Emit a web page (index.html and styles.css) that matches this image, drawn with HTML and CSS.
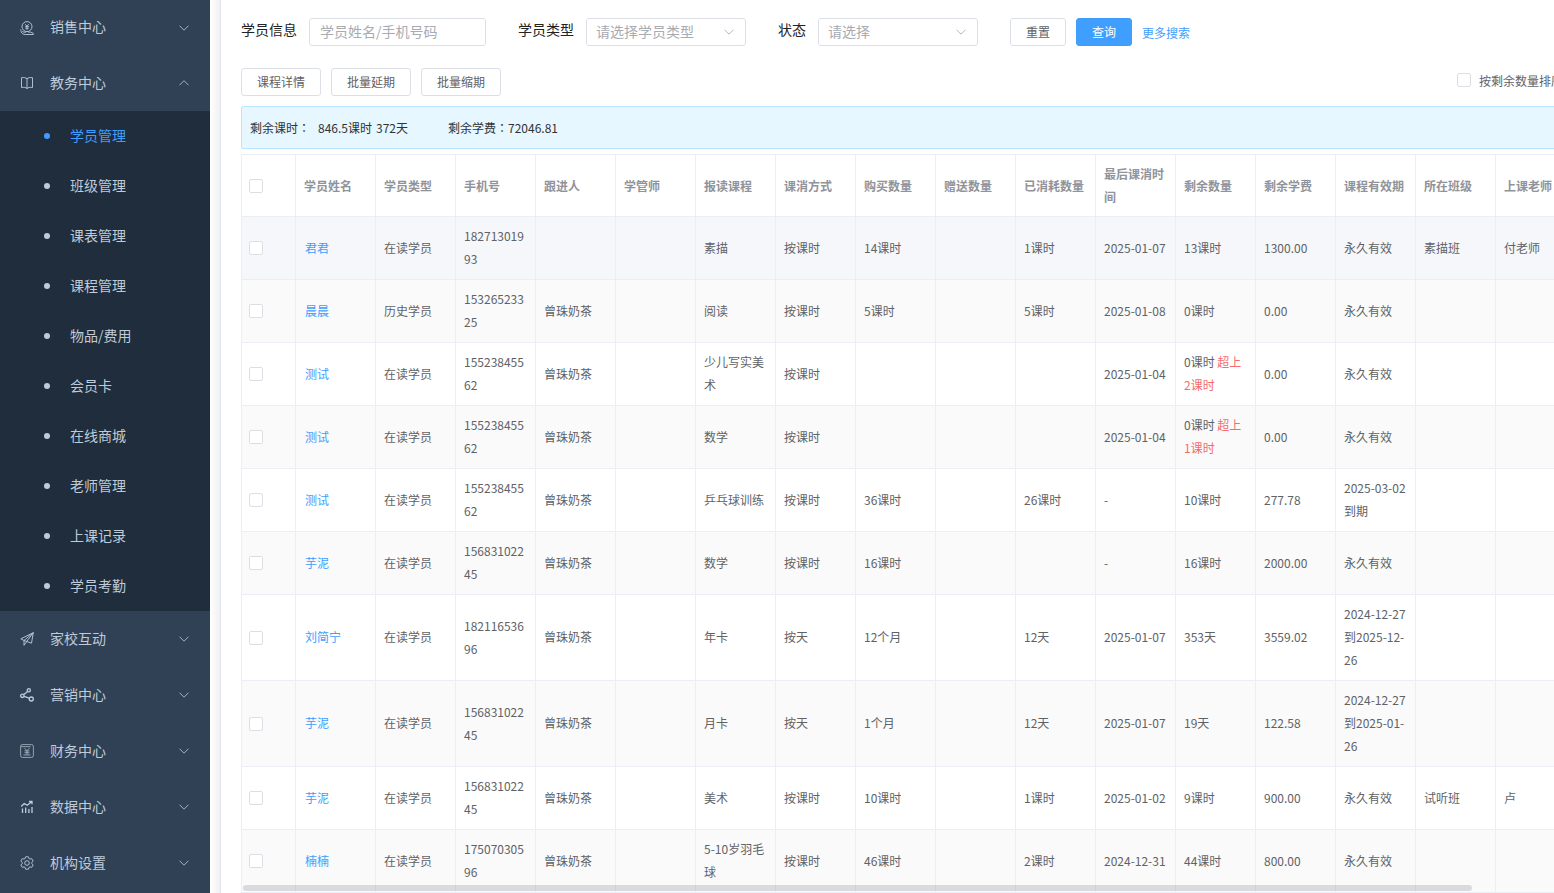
FILE: index.html
```html
<!DOCTYPE html>
<html lang="zh-CN">
<head>
<meta charset="utf-8">
<title>学员管理</title>
<link rel="stylesheet" href="styles.css">
</head>
<body>
<svg class="defs" aria-hidden="true">
  <symbol id="down" viewBox="0 0 12 12"><path d="M1.5 3.7 6 8.2l4.500-4.500"/></symbol>
  <symbol id="up" viewBox="0 0 12 12"><path d="M1.500 8.200 6 3.700l4.500 4.500"/></symbol>
</svg>
<div class="app">
  <nav class="sidebar">
    <a class="item" href="#"><svg class="icon" viewBox="0 0 14 14"><circle cx="7" cy="5.600" r="5"/><path d="M5.200 3.200 7 5.200l1.800-2M7 5.200v3.600M5.200 5.600h3.600M5.200 7.200h3.600M.5 8.500c.5 1.500 1.500 2.200 3 2.500l2.500.300M.8 10.500c1 2 2.500 3 4.500 3h8v-1.200l-2.800-1.200H8"/></svg><span>销售中心</span><svg class="arrow"><use href="#down"/></svg></a>
    <a class="item" href="#"><svg class="icon" viewBox="0 0 14 14"><path d="M7 2.800v9.700M7 2.800C5.800 1.600 4 1.300 1.500 1.700v9.800c2.500-.4 4.300-.1 5.500 1M7 2.800c1.200-1.200 3-1.500 5.500-1.100v9.800c-2.500-.4-4.300-.1-5.500 1"/></svg><span>教务中心</span><svg class="arrow"><use href="#up"/></svg></a>
    <div class="submenu">
      <a class="sub active" href="#"><span>学员管理</span></a>
      <a class="sub" href="#"><span>班级管理</span></a>
      <a class="sub" href="#"><span>课表管理</span></a>
      <a class="sub" href="#"><span>课程管理</span></a>
      <a class="sub" href="#"><span>物品/费用</span></a>
      <a class="sub" href="#"><span>会员卡</span></a>
      <a class="sub" href="#"><span>在线商城</span></a>
      <a class="sub" href="#"><span>老师管理</span></a>
      <a class="sub" href="#"><span>上课记录</span></a>
      <a class="sub" href="#"><span>学员考勤</span></a>
    </div>
    <a class="item" href="#"><svg class="icon" viewBox="0 0 14 14"><path d="M13.300.7.800 6.800l3.200 1.700 7.500 2.700zM13.300.7 4 8.500v4.800l2.600-3.700M13.300.7 6.600 9.600"/></svg><span>家校互动</span><svg class="arrow"><use href="#down"/></svg></a>
    <a class="item" href="#"><svg class="icon bold" viewBox="0 0 14 14"><circle cx="8.800" cy="2.300" r="1.600"/><circle cx="2.300" cy="7.800" r="1.700"/><circle cx="11.300" cy="11" r="2"/><path d="m7.600 3.500-4 3.200M4 8.400l5.300 1.800"/></svg><span>营销中心</span><svg class="arrow"><use href="#down"/></svg></a>
    <a class="item" href="#"><svg class="icon thin" viewBox="0 0 14 14"><rect x=".6" y=".6" width="12.800" height="12.800" rx="1.800"/><path d="M1 2.700h9.500M4.500 4.200 7 6.700l2.500-2.500M7 6.700v4M4.500 6.900h5M4.500 8.700h5M3.500 10.900h7"/></svg><span>财务中心</span><svg class="arrow"><use href="#down"/></svg></a>
    <a class="item" href="#"><svg class="icon bold" viewBox="0 0 14 14"><path d="m1.200 6.500 3-3 3 1.700 4.500-3.500M9 1.500h3v2.800M2.500 8.500v4.500M5.700 7.500V13M8.900 9v4M12 7v6"/></svg><span>数据中心</span><svg class="arrow"><use href="#down"/></svg></a>
    <a class="item" href="#"><svg class="icon" viewBox="0 0 14 14"><circle cx="7" cy="7" r="2.300"/><path d="M5.600.8h2.800l.5 1.700 1.100.600 1.700-.5 1.500 2.400L11.900 6.300v1.400l1.300 1.300-1.500 2.400-1.700-.5-1.100.600-.5 1.700H5.600l-.5-1.700-1.100-.600-1.700.5L.8 9l1.300-1.300V6.300L.8 5l1.500-2.400 1.700.5 1.100-.600z"/></svg><span>机构设置</span><svg class="arrow"><use href="#down"/></svg></a>
  </nav>
  <div class="edge"></div>
  <main class="panel">
    <form class="filters">
      <div class="field"><label for="info">学员信息</label><input class="box text" id="info" type="text" placeholder="学员姓名/手机号码"></div>
      <div class="field"><label for="type">学员类型</label><span class="pick"><select class="box" id="type"><option>请选择学员类型</option></select><svg class="caret"><use href="#down"/></svg></span></div>
      <div class="field"><label for="state">状态</label><span class="pick"><select class="box" id="state"><option>请选择</option></select><svg class="caret"><use href="#down"/></svg></span></div>
      <div class="actions"><button class="btn" type="button">重置</button><button class="btn primary" type="button">查询</button><a class="more" href="#">更多搜索</a></div>
    </form>
    <div class="toolbar">
      <button class="btn" type="button">课程详情</button>
      <button class="btn" type="button">批量延期</button>
      <button class="btn" type="button">批量缩期</button>
      <label class="sort"><input class="check" type="checkbox">按剩余数量排序</label>
    </div>
    <div class="summary">
      <span>剩余课时<span lang="zh-TW" class="colon">：</span></span><span class="hours">846.5课时</span><span class="days">372天</span><span class="fee">剩余学费<span lang="zh-TW" class="colon">：</span>72046.81</span>
    </div>
    <div class="grid">
      <table>
        <colgroup><col class="pickcol"><col span="16"></colgroup>
        <thead>
          <tr><th><input class="check" type="checkbox" aria-label="全选"></th><th>学员姓名</th><th>学员类型</th><th>手机号</th><th>跟进人</th><th>学管师</th><th>报读课程</th><th>课消方式</th><th>购买数量</th><th>赠送数量</th><th>已消耗数量</th><th>最后课消时间</th><th>剩余数量</th><th>剩余学费</th><th>课程有效期</th><th>所在班级</th><th>上课老师</th></tr>
        </thead>
        <tbody>
          <tr class="hover"><td><input class="check" type="checkbox" aria-label="选择君君"></td><td><a href="#">君君</a></td><td>在读学员</td><td>18271301993</td><td></td><td></td><td>素描</td><td>按课时</td><td>14课时</td><td></td><td>1课时</td><td>2025-01-07</td><td>13课时</td><td>1300.00</td><td>永久有效</td><td>素描班</td><td>付老师</td></tr>
          <tr><td><input class="check" type="checkbox" aria-label="选择晨晨"></td><td><a href="#">晨晨</a></td><td>历史学员</td><td>15326523325</td><td>曾珠奶茶</td><td></td><td>阅读</td><td>按课时</td><td>5课时</td><td></td><td>5课时</td><td>2025-01-08</td><td>0课时</td><td>0.00</td><td>永久有效</td><td></td><td></td></tr>
          <tr><td><input class="check" type="checkbox" aria-label="选择测试"></td><td><a href="#">测试</a></td><td>在读学员</td><td>15523845562</td><td>曾珠奶茶</td><td></td><td>少儿写实美术</td><td>按课时</td><td></td><td></td><td></td><td>2025-01-04</td><td>0课时 <span class="over">超上2课时</span></td><td>0.00</td><td>永久有效</td><td></td><td></td></tr>
          <tr><td><input class="check" type="checkbox" aria-label="选择测试"></td><td><a href="#">测试</a></td><td>在读学员</td><td>15523845562</td><td>曾珠奶茶</td><td></td><td>数学</td><td>按课时</td><td></td><td></td><td></td><td>2025-01-04</td><td>0课时 <span class="over">超上1课时</span></td><td>0.00</td><td>永久有效</td><td></td><td></td></tr>
          <tr><td><input class="check" type="checkbox" aria-label="选择测试"></td><td><a href="#">测试</a></td><td>在读学员</td><td>15523845562</td><td>曾珠奶茶</td><td></td><td>乒乓球训练</td><td>按课时</td><td>36课时</td><td></td><td>26课时</td><td>-</td><td>10课时</td><td>277.78</td><td>2025-03-02到期</td><td></td><td></td></tr>
          <tr><td><input class="check" type="checkbox" aria-label="选择芋泥"></td><td><a href="#">芋泥</a></td><td>在读学员</td><td>15683102245</td><td>曾珠奶茶</td><td></td><td>数学</td><td>按课时</td><td>16课时</td><td></td><td></td><td>-</td><td>16课时</td><td>2000.00</td><td>永久有效</td><td></td><td></td></tr>
          <tr><td><input class="check" type="checkbox" aria-label="选择刘简宁"></td><td><a href="#">刘简宁</a></td><td>在读学员</td><td>18211653696</td><td>曾珠奶茶</td><td></td><td>年卡</td><td>按天</td><td>12个月</td><td></td><td>12天</td><td>2025-01-07</td><td>353天</td><td>3559.02</td><td>2024-12-27到2025-12-26</td><td></td><td></td></tr>
          <tr><td><input class="check" type="checkbox" aria-label="选择芋泥"></td><td><a href="#">芋泥</a></td><td>在读学员</td><td>15683102245</td><td>曾珠奶茶</td><td></td><td>月卡</td><td>按天</td><td>1个月</td><td></td><td>12天</td><td>2025-01-07</td><td>19天</td><td>122.58</td><td>2024-12-27到2025-01-26</td><td></td><td></td></tr>
          <tr><td><input class="check" type="checkbox" aria-label="选择芋泥"></td><td><a href="#">芋泥</a></td><td>在读学员</td><td>15683102245</td><td>曾珠奶茶</td><td></td><td>美术</td><td>按课时</td><td>10课时</td><td></td><td>1课时</td><td>2025-01-02</td><td>9课时</td><td>900.00</td><td>永久有效</td><td>试听班</td><td>卢</td></tr>
          <tr><td><input class="check" type="checkbox" aria-label="选择楠楠"></td><td><a href="#">楠楠</a></td><td>在读学员</td><td>17507030596</td><td>曾珠奶茶</td><td></td><td>5-10岁羽毛球</td><td>按课时</td><td>46课时</td><td></td><td>2课时</td><td>2024-12-31</td><td>44课时</td><td>800.00</td><td>永久有效</td><td></td><td></td></tr>
        </tbody>
      </table>
      <div class="thumb"></div>
    </div>
  </main>
</div>
</body>
</html>
```
FILE: styles.css
```css
* { box-sizing: border-box; }

body {
  margin: 0;
  overflow: hidden;
  background: #fff;
  color: #606266;
  font: 12px/23px "Noto Sans CJK SC", sans-serif;
}

a { color: #409eff; text-decoration: none; }
button, input, select { margin: 0; font-family: inherit; }
.defs { display: none; }

.app { display: flex; height: 100vh; }

.sidebar {
  flex: 0 0 210px;
  overflow: hidden;
  background: #304156;
}

.item {
  display: flex;
  align-items: center;
  height: 56px;
  padding: 0 20px;
  color: #bfcbd9;
  font-size: 14px;
}

.item:first-child { height: 55px; }
.item span, .sub span { padding-bottom: 2px; }

.icon {
  width: 14px;
  height: 14px;
  margin-right: 16px;
  fill: none;
  stroke: #bfcbd9;
  stroke-width: 0.9;
}

.icon.thin { stroke-width: 0.7; }
.icon.bold { stroke-width: 1.3; }

.arrow, .caret {
  width: 12px;
  height: 12px;
  fill: none;
  stroke: #a5b1bf;
  stroke-width: 1;
}

.arrow { margin-left: auto; }

.submenu { background: #1f2d3d; }

.sub {
  display: flex;
  align-items: center;
  height: 50px;
  padding-left: 44px;
  color: #bfcbd9;
  font-size: 14px;
}

.sub::before {
  content: "";
  width: 6px;
  height: 6px;
  margin-right: 20px;
  border-radius: 50%;
  background: currentColor;
}

.sub.active { color: #409eff; }

.edge {
  flex: 0 0 11px;
  border-right: 1px solid #e2e5ee;
  background: linear-gradient(to right, #fff, #f0f0f0);
}

.panel {
  display: flex;
  flex: 1;
  flex-direction: column;
  min-width: 0;
  margin-right: -9px;
  padding: 18px 0 0 20px;
}

.filters { display: flex; gap: 32px; height: 28px; }
.field { display: flex; gap: 12px; }
.field label { color: #222; font-size: 14px; line-height: 22px; }

.box {
  width: 160px;
  height: 28px;
  padding: 0 9px 2px;
  border: 1px solid #dcdfe6;
  border-radius: 3px;
  background: #fff;
  color: #a8abb2;
  font-size: 14px;
  appearance: none;
}

.box.text { width: 177px; padding: 0 10px 2px; }
.box::placeholder { color: #a8abb2; }

.pick { position: relative; }
.caret { position: absolute; top: 8px; right: 11px; stroke: #b4b8c0; }

.btn {
  height: 28px;
  padding: 0 15px 1px;
  border: 1px solid #dcdfe6;
  border-radius: 3px;
  background: #fff;
  color: #606266;
  font-size: 12px;
}

.actions { display: flex; gap: 10px; align-items: center; }
.primary { border-color: #409eff; background: #409eff; color: #fff; }

.toolbar { display: flex; gap: 10px; margin-top: 22px; height: 28px; }

.sort {
  display: flex;
  gap: 8px;
  align-items: center;
  height: 24px;
  margin-left: auto;
}

.check {
  display: block;
  width: 14px;
  height: 14px;
  border: 1px solid #dcdfe6;
  border-radius: 2px;
  background: #fff;
  appearance: none;
}

.summary {
  display: flex;
  align-items: center;
  height: 43px;
  margin-top: 10px;
  padding-left: 8px;
  border: 1px solid #b9e6fd;
  border-radius: 2px;
  background: #e6f7ff;
  color: #333;
}

.colon { font-family: "Noto Sans CJK TC", sans-serif; }
.hours { margin-left: 8px; }
.days { margin-left: 4px; }
.fee { margin-left: 40px; }

.grid {
  position: relative;
  flex: 1;
  min-height: 0;
  margin-top: 5px;
  overflow: hidden;
}

table {
  width: 1335px;
  table-layout: fixed;
  border-spacing: 0;
  border: 1px solid #ebeef5;
  border-width: 1px 0 0 1px;
}

.pickcol { width: 54px; }

th, td {
  padding: 7px 8px 9px;
  border: 1px solid #ebeef5;
  border-width: 0 1px 1px 0;
  text-align: left;
  vertical-align: middle;
  word-break: break-all;
}

th { padding-bottom: 8px; color: #909399; font-weight: 700; }
th:first-child, td:first-child { padding: 8px 7px; }
td a { padding-left: 1px; }
tbody tr:nth-child(even) { background: #fafafa; }
tbody .hover { background: #f5f7fa; }
.over { color: #f56c6c; }

.thumb {
  position: absolute;
  bottom: 2px;
  left: 2px;
  width: 93%;
  height: 6px;
  border-radius: 3px;
  background: rgba(144, 147, 153, 0.3);
}
```
